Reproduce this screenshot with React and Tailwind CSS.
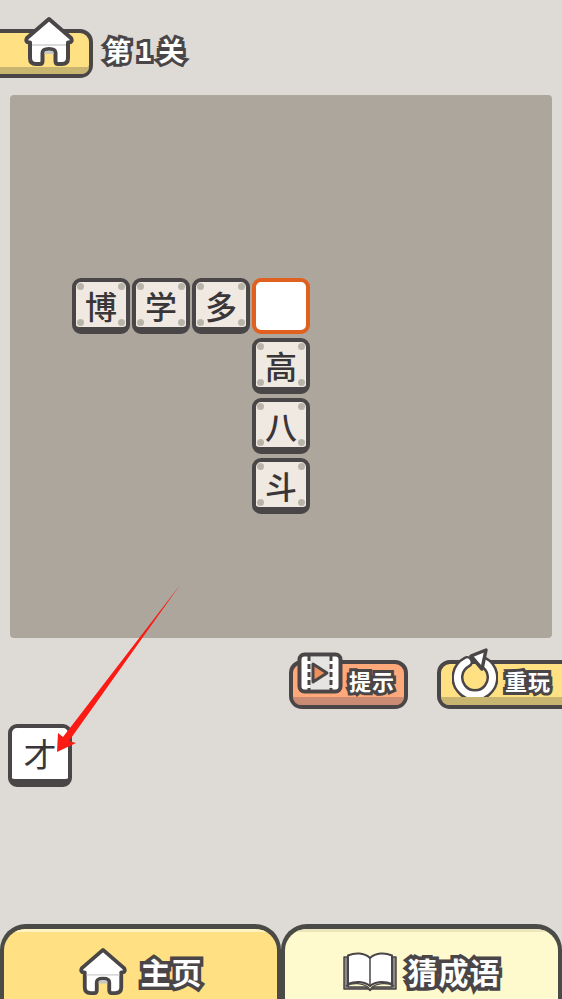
const DARK = '#4a4648';

const HomeIcon = ({ className }) => (
  <svg viewBox="0 0 50 50" className={className}>
    <path d="M25 3 L47 22 Q49 26 45 26.5 L44 26.5 L44 42 Q44 48 38 48 L34 48 Q31.5 48 31.5 45 L31.5 37 Q31.5 33 25 33 Q18.5 33 18.5 37 L18.5 45 Q18.5 48 16 48 L12 48 Q6 48 6 42 L6 26.5 L5 26.5 Q1 26 3 22 Z" fill="#fff" stroke={DARK} strokeWidth="4" strokeLinejoin="round" />
    <path d="M8 28 H42 V30 H8 Z" fill="#dcdad8" />
    <path d="M20.5 36 Q21 34.5 25 34.5 Q29 34.5 29.5 36 V38 H20.5 Z" fill="#c9c7c5" />
  </svg>
);

const FilmIcon = ({ className }) => (
  <svg viewBox="0 0 46 42" className={className}>
    <rect x="2.5" y="2.5" width="41" height="37" rx="5" fill="#fff" stroke={DARK} strokeWidth="4" />
    <path d="M13 5 H33 L35 37 H13 Z" fill="#e6e4e2" />
    <path d="M16 12 L30 21 L16 30 Z" fill="#ef8f5c" stroke={DARK} strokeWidth="3" strokeLinejoin="round" />
    <path d="M12 4 V38 M34 4 V38" stroke={DARK} strokeWidth="3" strokeDasharray="5 3" />
  </svg>
);

const ReplayIcon = ({ className }) => (
  <svg viewBox="0 0 46 50" className={className}>
    <path d="M15 15 A17.5 17.5 0 1 0 31 15" fill="none" stroke={DARK} strokeWidth="12" strokeLinecap="round" />
    <path d="M15 15 A17.5 17.5 0 1 0 31 15" fill="none" stroke="#fff" strokeWidth="7" strokeLinecap="round" />
    <path d="M34 3 L19 9 L30 22 Z" fill="#fff" stroke={DARK} strokeWidth="3.5" strokeLinejoin="round" />
  </svg>
);

const BookIcon = ({ className }) => (
  <svg viewBox="0 0 54 40" className={className}>
    <path d="M1 5 H5 V35 H23 L27 38.5 L31 35 H49 V5 H53 V37 H1 Z" fill="#8c8a88" stroke={DARK} strokeWidth="1.5" strokeLinejoin="round" />
    <path d="M27 6 C21 0.5 12 0.5 5 3.5 V32 C12 29 21 29 27 34 C33 29 42 29 49 32 V3.5 C42 0.5 33 0.5 27 6 Z" fill="#fff" stroke={DARK} strokeWidth="2" strokeLinejoin="round" />
    <path d="M27 6 V34" stroke={DARK} strokeWidth="1.5" />
    <path d="M3 34 C10 30 20 31 26 36 M51 34 C44 30 34 31 28 36" fill="none" stroke={DARK} strokeWidth="1.5" />
  </svg>
);

const CJK = "font-['Noto_Sans_CJK_SC','Noto_Sans',sans-serif]";

const Dot = ({ className }) => (
  <span className={`absolute w-[7px] h-[7px] rounded-full bg-[#b9b4aa] ${className}`} />
);

const Tile = ({ ch }) => (
  <div className="relative w-[58px] h-[56px] rounded-[9px] border-x-[4px] border-t-[4px] border-b-[7px] border-[#4a4648] bg-[#efe9e1] flex items-center justify-center">
    <Dot className="left-[1px] top-[1px]" />
    <Dot className="right-[1px] top-[1px]" />
    <Dot className="left-[1px] bottom-[1px]" />
    <Dot className="right-[1px] bottom-[1px]" />
    <span className={`${CJK} text-[32px] leading-none font-medium text-[#3a3638]`}>{ch}</span>
  </div>
);

const EmptyTile = () => (
  <div className="w-[58px] h-[56px] rounded-[9px] border-[4px] border-[#e0611f] bg-white" />
);

const ActionButton = ({ label, width, fill, band, icon, iconBox, labelBox }) => (
  <div className={`relative shrink-0 h-[49px] rounded-[13px] border-[4px] border-[#4a4648] ${width} ${fill}`}>
    <div className={`absolute left-0 right-0 bottom-0 h-[8px] rounded-b-[8px] ${band}`} />
    <div className={`absolute ${iconBox}`}>{icon}</div>
    <span className={`absolute ${labelBox} ${CJK} text-[22px] leading-none font-bold tracking-[1px] text-white [-webkit-text-stroke:6px_#4a4648] [paint-order:stroke_fill]`}>{label}</span>
  </div>
);

const Tab = ({ fill, gloss, children, gap }) => (
  <div className={`relative flex-1 h-[75px] rounded-t-[26px] border-x-[4px] border-t-[5px] border-[#4a4a46] overflow-hidden flex justify-center pt-[18px] ${gap} ${fill}`}>
    <div className={`absolute left-0 right-0 top-0 h-[3px] ${gloss}`} />
    {children}
  </div>
);

const TabLabel = ({ children }) => (
  <span className={`${CJK} text-[30px] leading-[48px] font-bold text-white tracking-[1px] [-webkit-text-stroke:7px_#4a4648] [paint-order:stroke_fill]`}>{children}</span>
);

export default function App() {
  return (
    <div className="relative w-[562px] h-[999px] overflow-hidden bg-[#dedbd7] flex flex-col">
      {/* Header */}
      <div className="h-[95px] shrink-0 flex items-start gap-[12px] pt-[29px]">
        <div className="relative shrink-0 w-[93px] h-[49px] rounded-r-[13px] border-y-[4px] border-r-[4px] border-[#4a4648] bg-[#ffe082]">
          <div className="absolute left-0 right-0 bottom-0 h-[7px] rounded-br-[8px] bg-[#c8b570]" />
          <HomeIcon className="absolute left-[24px] top-[-17px] w-[50px] h-[50px]" />
        </div>
        <span className={`${CJK} text-[26px] leading-[42px] font-bold tracking-[2px] text-white [-webkit-text-stroke:6px_#4a4648] [paint-order:stroke_fill]`}>第<span className="px-[4px]">1</span>关</span>
      </div>

      {/* Board */}
      <div className="mx-[10px] h-[543px] shrink-0 rounded-[4px] bg-[#aca69c] pl-[62px] pt-[183px]">
        <div className="grid grid-cols-[repeat(4,60px)] grid-rows-[repeat(4,60px)]">
          <Tile ch="博" />
          <Tile ch="学" />
          <Tile ch="多" />
          <EmptyTile />
          <div className="col-start-4"><Tile ch="高" /></div>
          <div className="col-start-4"><Tile ch="八" /></div>
          <div className="col-start-4"><Tile ch="斗" /></div>
        </div>
      </div>

      {/* Actions */}
      <div className="flex gap-[29px] pl-[289px] pt-[22px] w-[720px] shrink-0">
        <ActionButton
          label="提示"
          width="w-[119px]"
          fill="bg-[#ffa87a]"
          band="bg-[#c98c72]"
          icon={<FilmIcon className="w-[46px] h-[42px]" />}
          iconBox="left-[4px] top-[-12px]"
          labelBox="left-[56px] top-[5px]"
        />
        <ActionButton
          label="重玩"
          width="w-[140px]"
          fill="bg-[#ffe082]"
          band="bg-[#c8b570]"
          icon={<ReplayIcon className="w-[46px] h-[50px]" />}
          iconBox="left-[11px] top-[-17px]"
          labelBox="left-[64px] top-[5px]"
        />
      </div>

      {/* Answer letters */}
      <div className="pl-[8px] pt-[15px] shrink-0">
        <div className="w-[64px] h-[63px] rounded-[9px] border-x-[4px] border-t-[4px] border-b-[8px] border-[#4a4648] bg-white flex items-center justify-center">
          <span className={`${CJK} text-[33px] leading-none text-[#3a3638]`}>才</span>
        </div>
      </div>

      {/* Bottom tabs */}
      <div className="mt-auto flex">
        <Tab fill="bg-[#ffe082]" gloss="bg-[#fff3c4]" gap="gap-[14px]">
          <HomeIcon className="w-[48px] h-[48px]" />
          <TabLabel>主页</TabLabel>
        </Tab>
        <Tab fill="bg-[#fffacd]" gloss="bg-[#ece6bd]" gap="gap-[11px]">
          <BookIcon className="w-[54px] h-[40px] mt-[5px]" />
          <TabLabel>猜成语</TabLabel>
        </Tab>
      </div>

      {/* Tutorial arrow */}
      <svg className="absolute left-0 top-0 w-[562px] h-[999px] pointer-events-none" viewBox="0 0 562 999">
        <polygon points="180,585 69,741 76,743 57,752 58,733 63,737" fill="#fb1a14" />
      </svg>
    </div>
  );
}
